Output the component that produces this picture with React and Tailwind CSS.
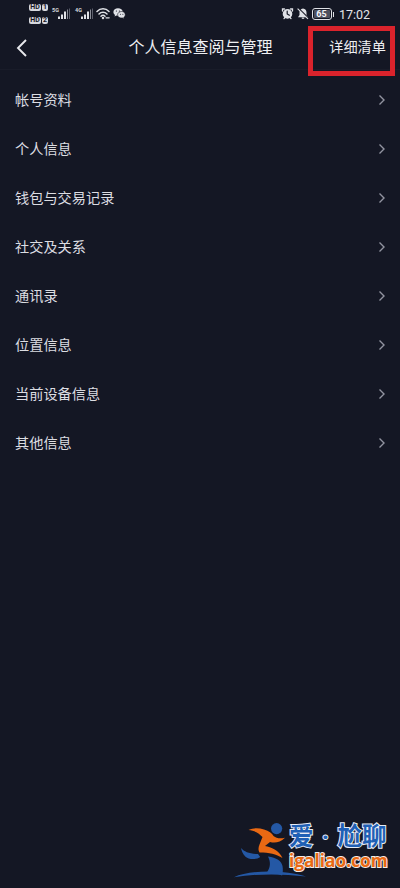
import React from 'react';

const items = [
    '帐号资料',
    '个人信息',
    '钱包与交易记录',
    '社交及关系',
    '通讯录',
    '位置信息',
    '当前设备信息',
    '其他信息',
];

const HdBadge = ({ slot }) => (
    <div className="flex gap-px h-[7px] text-[7px] leading-[7px] font-bold text-[#151724]">
        <span className="w-[12px] rounded-[2px] bg-[#d6d8de] text-center">HD</span>
        <span className="w-[6px] rounded-[2px] bg-[#d6d8de] text-center">{slot}</span>
    </div>
);

const Signal = ({ label }) => (
    <div className="flex">
        <span className="w-[6px] pt-[7px] text-[5.5px] leading-[6px] font-bold text-[#d6d8de]">{label}</span>
        <svg width="13" height="28" viewBox="0 0 13 28" fill="#dfe1e6">
            <rect x="0" y="16.5" width="2" height="2.5" />
            <rect x="3" y="14.5" width="2" height="4.5" />
            <rect x="6" y="11.5" width="2" height="7.5" />
            <rect x="9" y="9.5" width="1" height="9.5" fill="#8b8e98" />
            <rect x="11" y="8.5" width="1" height="10.5" fill="#5b5e6b" />
        </svg>
    </div>
);

const WifiIcon = () => (
    <svg width="15" height="28" viewBox="0 0 15 28" fill="none" stroke="#dfe1e6" strokeWidth="1.5" strokeLinecap="round">
        <path d="M1 11.4C4.4 7.9 9.6 7.9 13 11.4" />
        <path d="M3 13.9c2.2-2.3 5.8-2.3 8 0" />
        <path d="M5 16.2c1.2-1.2 2.8-1.2 4 0" />
        <circle cx="7" cy="18" r="0.5" fill="#dfe1e6" />
        <path d="M10 17.8h3.2" strokeWidth="1.2" />
    </svg>
);

const WechatIcon = () => (
    <svg width="13" height="28" viewBox="0 0 13 28">
        <path d="M5 8.2C2.4 8.2.4 9.9.4 12c0 1.2.6 2.2 1.6 2.9l-.4 1.5 1.7-.9c3.7.9 6.5-1 6.5-3.6C9.8 9.8 7.6 8.2 5 8.2z" fill="#dfe1e6" />
        <path d="M8.7 11.5c-2.3 0-4.1 1.4-4.1 3.3 0 2.2 2.3 3.7 5 3.1l1.5.8-.3-1.4c2.8-2.2 1.2-5.8-2.1-5.8z" fill="#dfe1e6" stroke="#151724" strokeWidth="0.6" />
        <g fill="#151724">
            <circle cx="3.4" cy="11" r="0.6" />
            <circle cx="6.4" cy="11" r="0.6" />
            <circle cx="7.4" cy="14.3" r="0.5" />
            <circle cx="9.9" cy="14.3" r="0.5" />
        </g>
    </svg>
);

const AlarmIcon = () => (
    <svg width="13" height="28" viewBox="0 0 13 28" fill="none" strokeLinecap="round">
        <path d="M1.5 11V9h2M9.5 9h2v2M3 18.6l.8-.8M10 18.6l-.8-.8" stroke="#dfe1e6" strokeWidth="1.3" />
        <circle cx="6.5" cy="13.9" r="4.8" fill="#dfe1e6" />
        <path d="M6.2 11.2V14l2.2 1.2" stroke="#151724" strokeWidth="1.2" />
    </svg>
);

const BellOffIcon = () => (
    <svg width="12" height="28" viewBox="0 0 12 28">
        <path d="M6 8.5c-2.3.3-3.5 2-3.5 4v2.6L1 17.2h10l-1.5-2.1v-2.6c0-2-1.2-3.7-3.5-4z" fill="#dfe1e6" />
        <path d="M4.8 18.2h2.4" stroke="#dfe1e6" strokeWidth="1.2" />
        <path d="M1.5 8.2l10.5 10.5" stroke="#151724" strokeWidth="1.3" />
        <path d="M.6 8.6l10.4 10.3" stroke="#dfe1e6" strokeWidth="1.1" />
    </svg>
);

const StatusBar = () => (
    <div className="flex h-7 justify-between pl-[29px] pr-[29px]">
        <div className="flex">
            <div className="flex w-[22px] flex-col gap-[6px] pt-[4px]">
                <HdBadge slot="1" />
                <HdBadge slot="2" />
            </div>
            <div className="flex gap-[4px] pl-px">
                <Signal label="5G" />
                <Signal label="4G" />
            </div>
            <div className="flex gap-[2px] pl-[2px]">
                <WifiIcon />
                <WechatIcon />
            </div>
        </div>
        <div className="flex">
            <AlarmIcon />
            <div className="w-[3px]" />
            <BellOffIcon />
            <div className="flex items-center pl-[3px]">
                <div className="flex h-[12px] w-[20px] items-stretch rounded-[3px] border border-[#dfe1e6] p-px">
                    <span className="w-full rounded-[1px] bg-[#4d505e] text-center text-[9px] leading-[8px] font-bold text-[#f2f3f6]">65</span>
                </div>
                <div className="ml-px h-[5px] w-[1.5px] bg-[#dfe1e6]" />
            </div>
            <span className="w-[32px] ml-[5px] text-[12.5px] leading-[29px] whitespace-nowrap text-[#e3e4e9]">17:02</span>
        </div>
    </div>
);

const Watermark = () => (
    <div className="absolute left-[234px] top-[820px] flex">
        <svg width="76" height="60" viewBox="0 0 76 60">
            <circle cx="42.6" cy="8.6" r="5.6" fill="#2458a5" />
            <path d="M14.5 10C20 7.500 25 8 30 9.500c5 1.600 8 3.500 9.500 6.500 3.200 2.500 6.500 2.900 11.500 1.700-5 4.800-10 5.400-15 4.200L31 26c6 1.300 14 4 17.500 12-6.500-4.200-13-5.500-23-5.600-1.500-1.800-1.200-5 0-7.900l3-7.500C24.500 13 20.500 10.500 14.500 10z" fill="#e96913" />
            <path d="M7 28c3.500 4 8.500 5.800 17 6l2.200 3c-2.500 2-7.500 2.600-11.500 1.400C10.500 37 8 33 7 28z" fill="#2458a5" />
            <path d="M34 36.500c8.500 1 13.500 4.500 14.500 9.500.6 3.500.4 6.500-.4 9.500-3.500-2-9.200-2.700-15.600-2.500 4-5.500 4.500-10.500 1.500-16.500z" fill="#2458a5" />
            <path d="M0 57.200C15 50 50 49.500 72 56.500 47 53.500 22 53.700 0 57.200z" fill="#2458a5" />
        </svg>
        <div className="-ml-[21px] pt-[3px] whitespace-nowrap">
            <p className="h-[31px] text-[24.5px] leading-[27px] font-bold text-[#1f60b5] [paint-order:stroke] [-webkit-text-stroke:2px_#e8edf5]">爱<span className="inline-block w-[24px] text-center">·</span>尬聊</p>
            <p className="-mt-[5px] font-['Open_Sans',sans-serif] text-[17.3px] leading-[24px] font-bold text-[#e96913] [paint-order:stroke] [-webkit-text-stroke:2px_#f3ece8]">igaliao.com</p>
        </div>
    </div>
);

const App = () => {
    return (
        <div className="relative h-[888px] w-[400px] overflow-hidden bg-[#141724] font-['Roboto','Noto_Sans_CJK_SC',sans-serif]">
            <StatusBar />

            <header className="flex h-[42px] items-center justify-between border-b border-[#191c29] pr-[14px] pb-[2px] pl-[16px]">
                <svg width="70" height="20" viewBox="0 0 70 20" fill="none" stroke="#e8e9ed" strokeWidth="1.9">
                    <path d="M10 2L2 10l8 8" />
                </svg>
                <h1 className="text-[16px] leading-6 text-[#eeeff2]">个人信息查阅与管理</h1>
                <button className="w-[71px] pb-px text-right text-[14.2px] leading-5 whitespace-nowrap text-[#eeeff2]">详细清单</button>
            </header>
            <div className="absolute top-[26px] left-[308px] h-[50px] w-[87px] border-[5px] border-[#da232c]" />

            <ul className="pt-[5px]">
                {items.map((item) => (
                    <li key={item} className="flex h-[49px] items-center justify-between pr-[15px] pl-[15px] text-[14.2px] text-[#dcdde2]">
                        <span className="pt-[2px]">{item}</span>
                        <svg width="7" height="12" viewBox="0 0 7 12" fill="none" stroke="#9294a0" strokeWidth="1.4">
                            <path d="M1.5 1.5L6 6 1.5 10.5" />
                        </svg>
                    </li>
                ))}
            </ul>

            <Watermark />
        </div>
    );
};

export default App;
